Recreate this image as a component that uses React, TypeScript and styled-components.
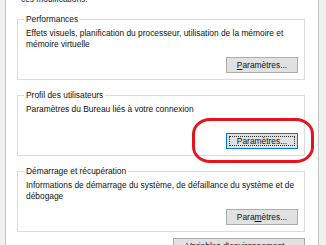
import styled, { createGlobalStyle } from 'styled-components'

const GlobalStyle = createGlobalStyle`
  html, body {
    margin: 0;
    padding: 0;
    background: #f0f0f0;
    overflow: hidden;
  }
  body {
    font-family: "Liberation Sans", Arial, sans-serif;
    font-size: 8.4px;
    color: #111;
  }
`

const Page = styled.div`
  position: relative;
  width: 326px;
  height: 245px;
  padding-left: 5px;
  box-sizing: border-box;
  overflow: hidden;
`

const Panel = styled.div`
  width: 314px;
  height: 260px;
  box-sizing: border-box;
  background: #fff;
  border-left: 1px solid #c4c4c4;
  border-right: 1px solid #c4c4c4;
  padding: 0 13px 0 11px;
  display: flex;
  flex-direction: column;
`

const Intro = styled.div`
  margin-top: -6px;
  margin-left: 4px;
  line-height: 11px;
  height: 11px;
`

const GroupBox = styled.div<{ $first?: boolean }>`
  position: relative;
  margin-top: ${(p) => (p.$first ? '14px' : '15px')};
  border: 1px solid #dcdcdc;
  padding: 8px 6px 6px 8px;
  display: flex;
  flex-direction: column;
`

const GroupTitle = styled.span`
  position: absolute;
  top: -6px;
  left: 6px;
  padding: 0 2px;
  background: #fff;
  line-height: 11px;
`

const Description = styled.div`
  line-height: 11px;
  min-height: 22px;
`

const ButtonRow = styled.div`
  display: flex;
  justify-content: flex-end;
  margin-top: 7px;
`

const Button = styled.button<{ $focused?: boolean; $width?: number }>`
  width: ${(p) => p.$width ?? 72}px;
  height: 16px;
  box-sizing: border-box;
  padding: 0;
  margin: 0;
  font-family: inherit;
  font-size: 8.4px;
  color: #111;
  background: #e1e1e1;
  border: 1px solid ${(p) => (p.$focused ? '#0078d7' : '#adadad')};
  position: relative;
  display: flex;
  align-items: center;
  justify-content: center;

  ${(p) =>
    p.$focused &&
    `
    &::after {
      content: '';
      position: absolute;
      inset: 2px;
      border: 1px dotted #333;
    }
  `}
`

const BottomRow = styled.div`
  display: flex;
  justify-content: flex-end;
  margin-top: 6px;
`

const Highlight = styled.div`
  position: absolute;
  left: 192px;
  top: 118px;
  width: 122px;
  height: 45px;
  box-sizing: border-box;
  border: 3px solid #e3141c;
  border-radius: 18px / 16px;
  pointer-events: none;
`

export default function App() {
  return (
    <>
      <GlobalStyle />
      <Page>
        <Panel>
          <Intro>ces modifications.</Intro>

          <GroupBox $first>
            <GroupTitle>Performances</GroupTitle>
            <Description>
              Effets visuels, planification du processeur, utilisation de la mémoire et
              <br />
              mémoire virtuelle
            </Description>
            <ButtonRow>
              <Button>
                <u>P</u>aramètres...
              </Button>
            </ButtonRow>
          </GroupBox>

          <GroupBox>
            <GroupTitle>Profil des utilisateurs</GroupTitle>
            <Description>Paramètres du Bureau liés à votre connexion</Description>
            <ButtonRow>
              <Button $focused>Paramètres...</Button>
            </ButtonRow>
          </GroupBox>

          <GroupBox>
            <GroupTitle>Démarrage et récupération</GroupTitle>
            <Description>
              Informations de démarrage du système, de défaillance du système et de
              <br />
              débogage
            </Description>
            <ButtonRow>
              <Button>
                Para<u>m</u>ètres...
              </Button>
            </ButtonRow>
          </GroupBox>

          <BottomRow>
            <Button $width={132}>
              Variables d'<u>e</u>nvironnement...
            </Button>
          </BottomRow>
        </Panel>
        <Highlight />
      </Page>
    </>
  )
}
